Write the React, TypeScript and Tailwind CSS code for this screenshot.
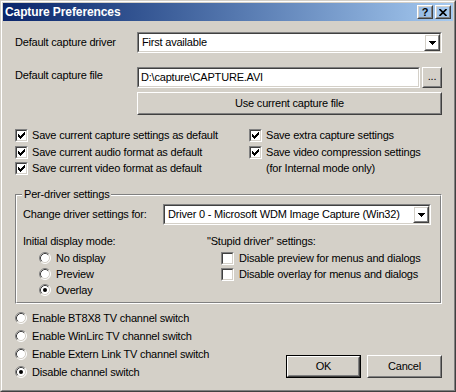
import React from "react";

type Box = { children?: React.ReactNode; className?: string };

// classic 3d edges
const Raised = ({ children, className = "" }: Box) => (
  <div className={`flex border border-t-white border-l-white border-r-[#404040] border-b-[#404040] ${className}`}>
    <div className="flex h-full w-full items-center justify-center border border-t-[#d4d0c8] border-l-[#d4d0c8] border-r-[#808080] border-b-[#808080]">
      {children}
    </div>
  </div>
);

const Sunken = ({ children, className = "" }: Box) => (
  <div className={`flex border border-t-[#808080] border-l-[#808080] border-r-white border-b-white ${className}`}>
    <div className="flex h-full w-full items-center border border-t-[#404040] border-l-[#404040] border-r-[#d4d0c8] border-b-[#d4d0c8] bg-white">
      {children}
    </div>
  </div>
);

const Button = ({ children, className = "", primary = false }: Box & { primary?: boolean }) =>
  primary ? (
    <div className={`flex border border-black ${className}`}>
      <Raised className="h-full w-full">{children}</Raised>
    </div>
  ) : (
    <Raised className={className}>{children}</Raised>
  );

const Arrow = () => (
  <svg width="7" height="4" viewBox="0 0 7 4" shapeRendering="crispEdges">
    <rect x="0" y="0" width="7" height="1" fill="#000" />
    <rect x="1" y="1" width="5" height="1" fill="#000" />
    <rect x="2" y="2" width="3" height="1" fill="#000" />
    <rect x="3" y="3" width="1" height="1" fill="#000" />
  </svg>
);

const Combo = ({ value, className = "" }: { value: string; className?: string }) => (
  <Sunken className={`h-[21px] ${className}`}>
    <div className="flex-1 truncate pl-[3px]">{value}</div>
    <Raised className="h-[17px] w-[16px] shrink-0">
      <Arrow />
    </Raised>
  </Sunken>
);

const tick = [3, 4, 5, 4, 3, 2, 1];

const Check = ({ checked = false }: { checked?: boolean }) => (
  <Sunken className="h-[13px] w-[13px] shrink-0">
    {checked && (
      <svg width="9" height="9" viewBox="0 0 9 9" shapeRendering="crispEdges">
        {tick.map((y, i) => (
          <rect key={i} x={i + 1} y={y} width="1" height="3" fill="#000" />
        ))}
      </svg>
    )}
  </Sunken>
);

const Radio = ({ on = false }: { on?: boolean }) => (
  <svg width="12" height="12" viewBox="0 0 12 12" className="shrink-0">
    <circle cx="6" cy="6" r="5" fill="#fff" />
    <path d="M2.11 9.89 A5.5 5.5 0 0 1 9.89 2.11" fill="none" stroke="#808080" />
    <path d="M9.89 2.11 A5.5 5.5 0 0 1 2.11 9.89" fill="none" stroke="#fff" />
    <path d="M2.82 9.18 A4.5 4.5 0 0 1 9.18 2.82" fill="none" stroke="#404040" />
    <path d="M9.18 2.82 A4.5 4.5 0 0 1 2.82 9.18" fill="none" stroke="#d4d0c8" />
    {on && <circle cx="6" cy="6" r="2" fill="#000" />}
  </svg>
);

const CheckRow = ({ label, checked = false, className = "" }: { label: React.ReactNode; checked?: boolean; className?: string }) => (
  <div className={`flex items-center gap-[4px] ${className}`}>
    <Check checked={checked} />
    <span>{label}</span>
  </div>
);

const RadioRow = ({ label, on = false, className = "" }: { label: string; on?: boolean; className?: string }) => (
  <div className={`flex items-center gap-[5px] ${className}`}>
    <Radio on={on} />
    <span>{label}</span>
  </div>
);

export default function App() {
  return (
    <div className="h-[392px] w-[456px] font-['Liberation_Sans',Arial,sans-serif] text-[11px] leading-[13px] tracking-[-0.2px] text-black">
      <div className="flex h-full w-full border border-t-[#d4d0c8] border-l-[#d4d0c8] border-r-[#404040] border-b-[#404040]">
        <div className="flex h-full w-full flex-col border border-t-white border-l-white border-r-[#808080] border-b-[#808080] bg-[#d4d0c8] p-px">
          {/* title bar */}
          <div className="flex h-[18px] shrink-0 items-center bg-linear-to-r from-[#0a246a] to-[#a6caf0] px-[2px]">
            <span className="flex-1 text-[12px] font-bold tracking-[-0.1px] text-white">Capture Preferences</span>
            <Button className="h-[14px] w-[16px]">
              <span className="text-[11px] font-bold leading-[10px]">?</span>
            </Button>
            <Button className="ml-[2px] h-[14px] w-[16px]">
              <svg width="8" height="7" viewBox="0 0 8 7">
                <path d="M0.5 0 L7.5 7 M7.5 0 L0.5 7" stroke="#000" strokeWidth="1.6" />
              </svg>
            </Button>
          </div>

          <div className="flex flex-1 flex-col pl-[12px] pr-[11px]">
            <div className="mt-[11px] flex h-[21px] items-center">
              <span className="w-[122px] shrink-0">Default capture driver</span>
              <Combo value="First available" className="flex-1" />
            </div>

            <div className="mt-[14px] flex h-[21px] items-center">
              <span className="w-[122px] shrink-0 pb-[5px]">Default capture file</span>
              <Sunken className="h-[21px] flex-1">
                <span className="pl-[2px]">D:\capture\CAPTURE.AVI</span>
              </Sunken>
              <Button className="ml-[2px] h-[21px] w-[20px]">
                <span className="pb-[3px]">...</span>
              </Button>
            </div>

            <Button className="ml-[122px] mt-[4px] h-[23px]">Use current capture file</Button>

            <div className="mt-[12px] flex">
              <div className="flex w-[234px] flex-col">
                <CheckRow checked className="h-[16px]" label="Save current capture settings as default" />
                <CheckRow checked className="mt-px h-[16px]" label="Save current audio format as default" />
                <CheckRow checked className="h-[16px]" label="Save current video format as default" />
              </div>
              <div className="flex flex-col">
                <CheckRow checked className="h-[16px]" label="Save extra capture settings" />
                <div className="mt-px flex items-start gap-[4px] leading-[16px]">
                  <div className="pt-[2px]">
                    <Check checked />
                  </div>
                  <span>
                    Save video compression settings
                    <br />
                    (for Internal mode only)
                  </span>
                </div>
              </div>
            </div>

            {/* group box */}
            <div className="relative mt-[18px] flex h-[110px] shrink-0 border border-t-[#808080] border-l-[#808080] border-r-white border-b-white">
              <span className="absolute -top-[7px] left-[6px] bg-[#d4d0c8] px-[2px]">Per-driver settings</span>
              <div className="flex h-full w-full flex-col border border-t-white border-l-white border-r-[#808080] border-b-[#808080] pl-[6px] pr-[9px]">
                <div className="mt-[8px] flex h-[21px] items-center">
                  <span className="w-[140px] shrink-0">Change driver settings for:</span>
                  <Combo value="Driver 0 - Microsoft WDM Image Capture (Win32)" className="flex-1" />
                </div>
                <div className="mt-[10px] flex">
                  <div className="flex w-[184px] flex-col">
                    <span>Initial display mode:</span>
                    <div className="mt-[2px] flex flex-col pl-[16px]">
                      <RadioRow className="h-[16px]" label="No display" />
                      <RadioRow className="h-[16px]" label="Preview" />
                      <RadioRow on className="h-[16px]" label="Overlay" />
                    </div>
                  </div>
                  <div className="flex flex-col">
                    <span>"Stupid driver" settings:</span>
                    <div className="mt-[2px] flex flex-col pl-[14px]">
                      <CheckRow className="h-[16px] gap-[5px]" label="Disable preview for menus and dialogs" />
                      <CheckRow className="h-[16px] gap-[5px]" label="Disable overlay for menus and dialogs" />
                    </div>
                  </div>
                </div>
              </div>
            </div>

            <div className="mt-[5px] flex items-end">
              <div className="flex flex-1 flex-col">
                <RadioRow className="h-[18px]" label="Enable BT8X8 TV channel switch" />
                <RadioRow className="h-[18px]" label="Enable WinLirc TV channel switch" />
                <RadioRow className="h-[18px]" label="Enable Extern Link TV channel switch" />
                <RadioRow on className="h-[18px]" label="Disable channel switch" />
              </div>
              <div className="mb-[3px] flex gap-[6px]">
                <Button primary className="h-[23px] w-[75px]">OK</Button>
                <Button className="h-[23px] w-[75px]">Cancel</Button>
              </div>
            </div>
          </div>
        </div>
      </div>
    </div>
  );
}
